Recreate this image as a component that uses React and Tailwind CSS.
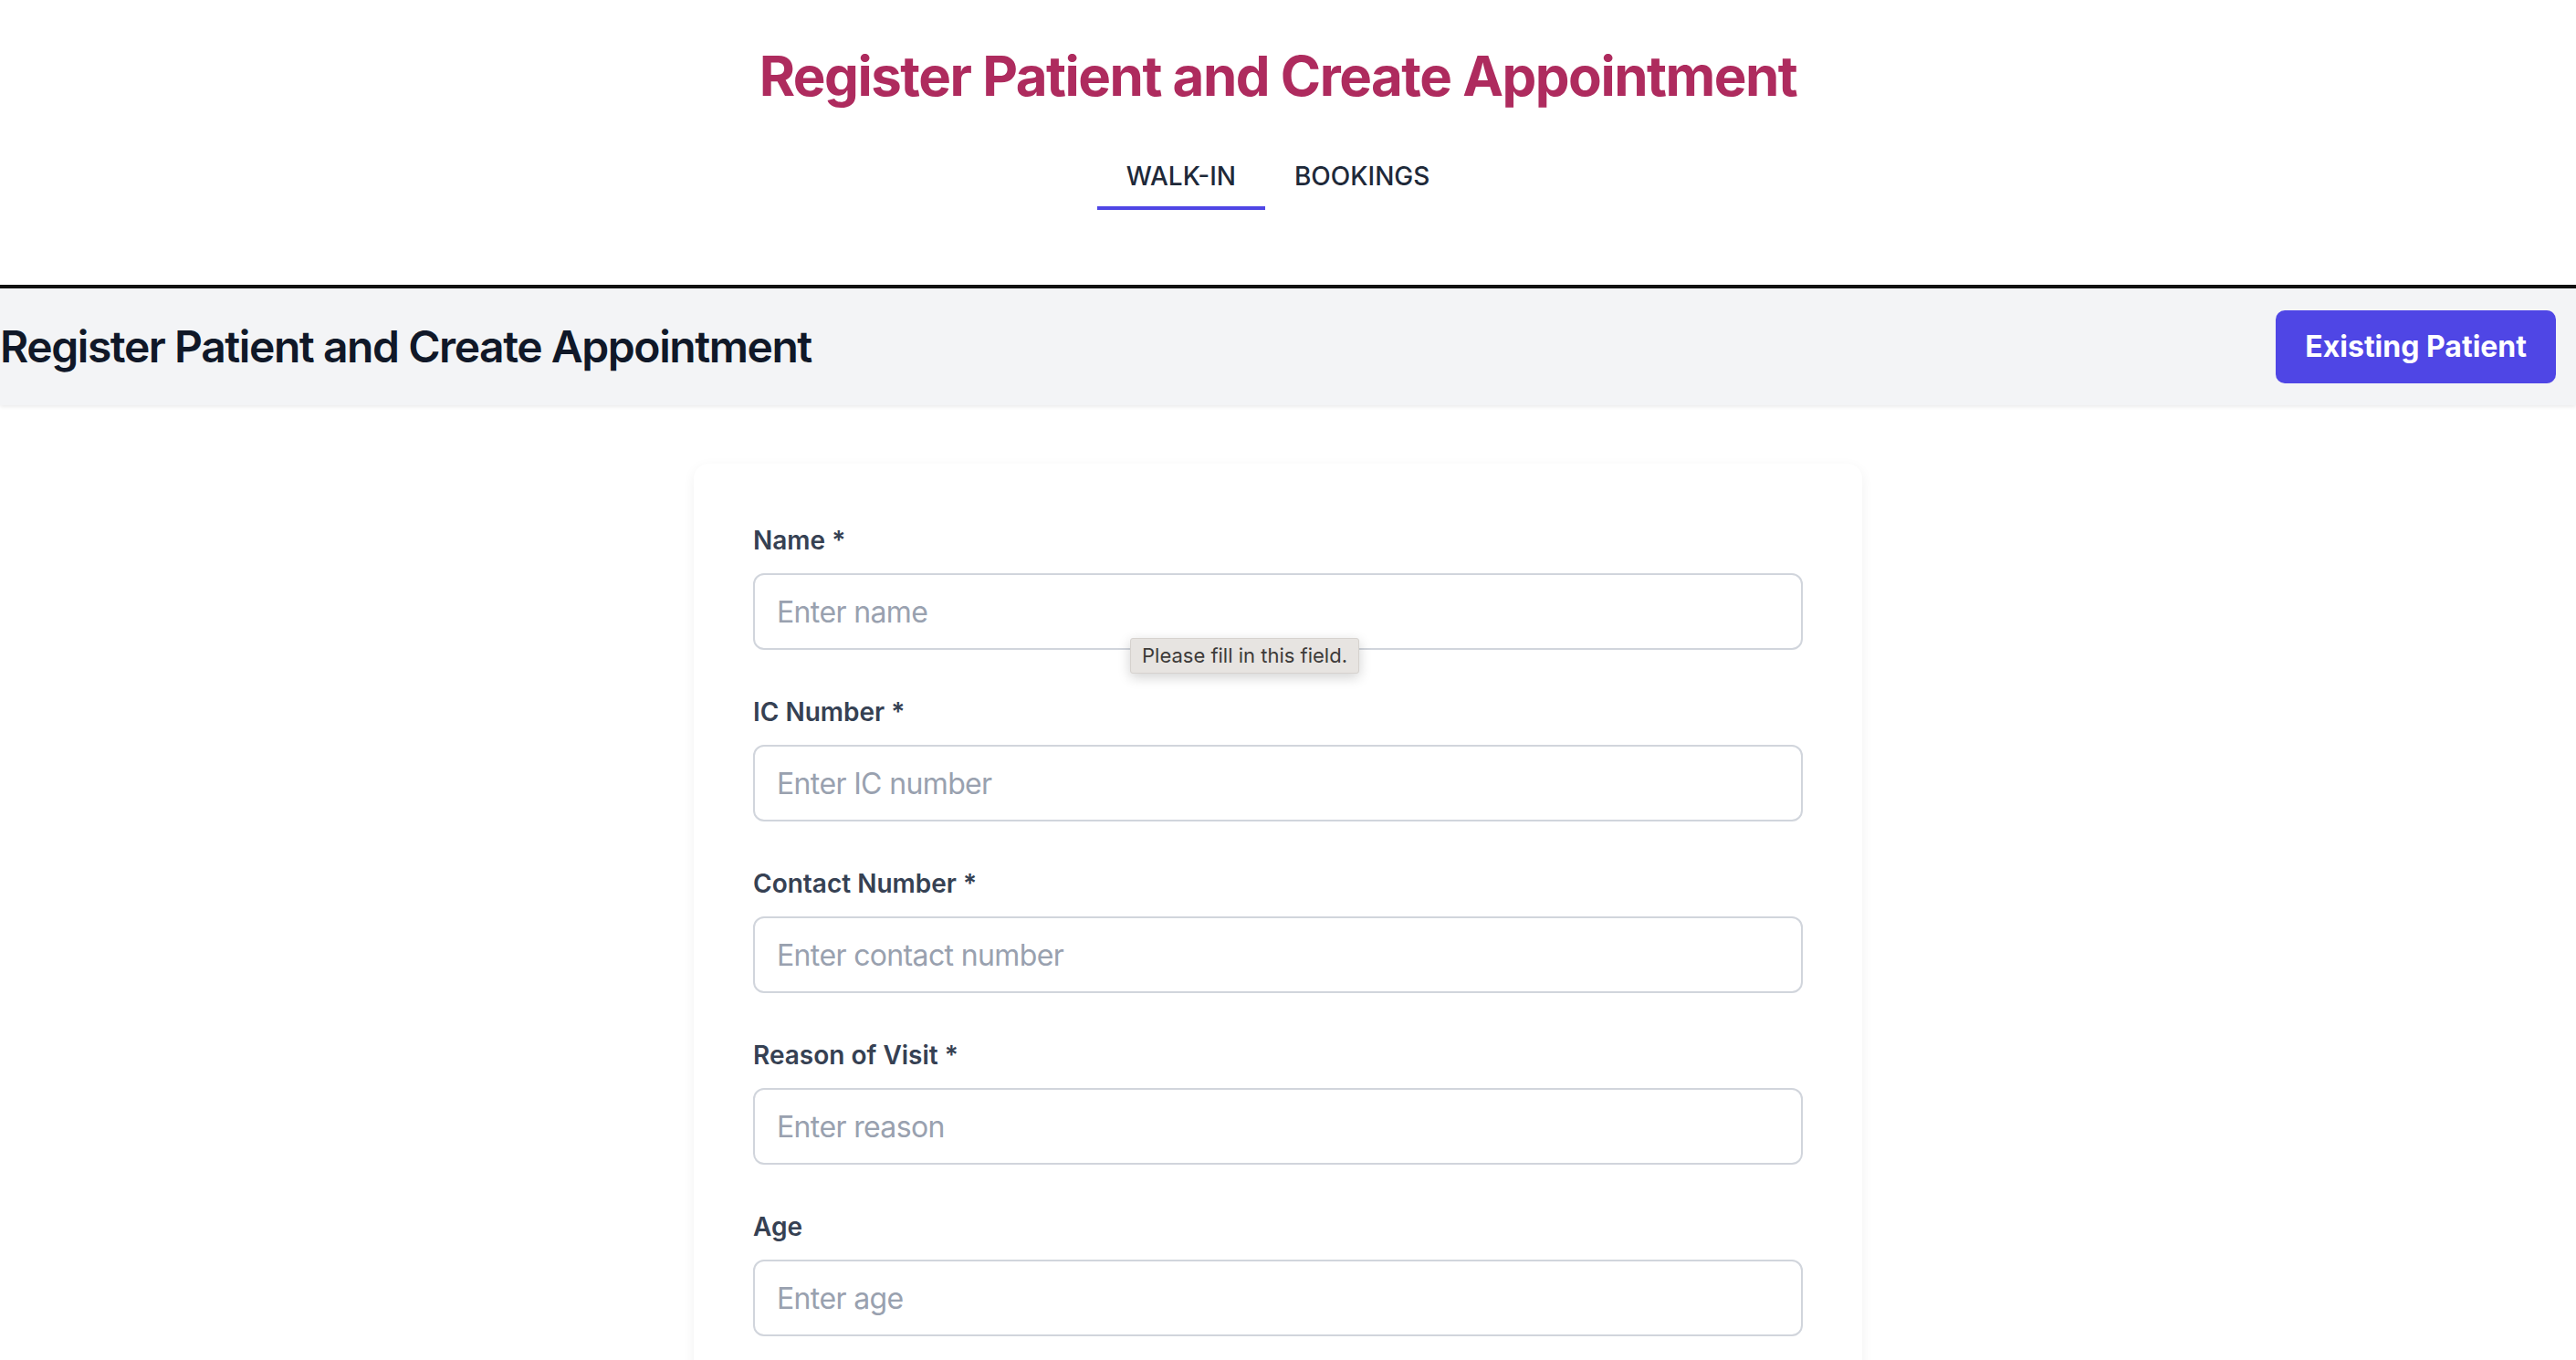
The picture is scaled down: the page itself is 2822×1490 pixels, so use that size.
import { useState } from "react";

const fields = [
  { label: "Name *", placeholder: "Enter name", tooltip: true },
  { label: "IC Number *", placeholder: "Enter IC number" },
  { label: "Contact Number *", placeholder: "Enter contact number" },
  { label: "Reason of Visit *", placeholder: "Enter reason" },
  { label: "Age", placeholder: "Enter age" },
];

const Field = ({ label, placeholder, tooltip }) => (
  <div className="relative mb-[48px]">
    <label className="block mb-[16px] text-[28px] leading-[40px] font-semibold text-gray-700">
      {label}
    </label>
    <input
      type="text"
      placeholder={placeholder}
      className="block w-full h-[84px] px-[24px] border-2 border-gray-300 rounded-[12px] text-[32px] tracking-[-0.02em] text-gray-900 placeholder:text-gray-400 outline-none bg-white"
    />
    {tooltip && (
      <div className="absolute left-[413px] top-[127px] h-[39px] px-[12px] flex items-center bg-[#e7e4e1] border border-[#d6d2ce] rounded-[3px] shadow-[0_4px_14px_rgba(0,0,0,0.18)] text-[22px] text-[#3d3b39] whitespace-nowrap">
        Please fill in this field.
      </div>
    )}
  </div>
);

export default function App() {
  const [tab, setTab] = useState("walkin");

  return (
    <div className="min-h-screen bg-white font-['Inter',sans-serif]">
      <div className="w-[2800px] pt-[47px]">
        <h1 className="text-center text-[60px] leading-[72px] font-bold tracking-[-0.025em] text-[#ae2b5e]">
          Register Patient and Create Appointment
        </h1>
        <div className="flex justify-center mt-[40px]">
          <button
            onClick={() => setTab("walkin")}
            className={`px-[32px] pt-[14px] pb-[13px] text-[28px] leading-[40px] font-medium text-gray-800 border-b-4 ${
              tab === "walkin" ? "border-[#4f46e5]" : "border-transparent"
            }`}
          >
            WALK-IN
          </button>
          <button
            onClick={() => setTab("bookings")}
            className={`px-[32px] pt-[14px] pb-[13px] text-[28px] leading-[40px] font-medium text-gray-800 border-b-4 ${
              tab === "bookings" ? "border-[#4f46e5]" : "border-transparent"
            }`}
          >
            BOOKINGS
          </button>
        </div>
      </div>

      <div className="mt-[82px] border-t-4 border-[#111]">
        <div className="flex items-center justify-between bg-gray-100 py-6 pr-[22px] shadow-[0_2px_4px_rgba(0,0,0,0.08)]">
          <h2 className="text-[48px] leading-[48px] font-semibold tracking-[-0.03em] text-gray-900">
            Register Patient and Create Appointment
          </h2>
          <button className="px-8 py-4 rounded-[10px] bg-[#4f46e5] text-white text-[32px] leading-[48px] font-bold">
            Existing Patient
          </button>
        </div>
      </div>

      <div className="w-[2800px] pt-[64px] pb-[64px]">
        <form className="w-[1280px] mx-auto bg-white rounded-[16px] px-[65px] pt-[64px] pb-[32px] shadow-[0_4px_14px_rgba(0,0,0,0.06)]">
          {fields.map((f) => (
            <Field key={f.label} {...f} />
          ))}
        </form>
      </div>
    </div>
  );
}
